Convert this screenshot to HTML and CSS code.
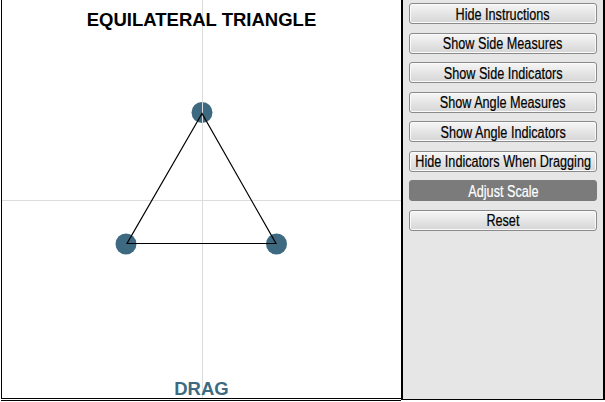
FILE: index.html
```html
<!DOCTYPE html>
<html lang="en">
  <head>
    <title>Equilateral Triangle</title>
    <link rel="stylesheet" href="styles.css">
  </head>
  <body>
    <div class="app">
      <div class="left">
        <div class="stage">
          <svg class="board" width="399" height="398" viewBox="2 0 399 398">
            <circle cx="202" cy="112.5" r="10.5" class="pt" />
            <circle cx="126" cy="244" r="10.5" class="pt" />
            <circle cx="276.5" cy="244" r="10.5" class="pt" />
            <line x1="202.5" y1="0" x2="202.5" y2="398" class="grid" />
            <line x1="2" y1="200.5" x2="401" y2="200.5" class="grid" />
            <polygon points="202,113.5 127,243.5 276,243.5" class="tri" />
          </svg>
          <h1 class="title">EQUILATERAL TRIANGLE</h1>
          <div class="drag">DRAG</div>
        </div>
      </div>
      <div class="panel">
        <button class="btn"><span>Hide Instructions</span></button>
        <button class="btn"><span>Show Side Measures</span></button>
        <button class="btn"><span>Show Side Indicators</span></button>
        <button class="btn"><span>Show Angle Measures</span></button>
        <button class="btn"><span>Show Angle Indicators</span></button>
        <button class="btn"><span>Hide Indicators When Dragging</span></button>
        <button class="btn active"><span>Adjust Scale</span></button>
        <button class="btn"><span>Reset</span></button>
      </div>
    </div>
  </body>
</html>
```

FILE: styles.css
```css
body {
  margin: 0;
  background: #fff;
  font-family: "Liberation Sans", Arial, sans-serif;
}
.app {
  display: flex;
  width: 605px;
  height: 402px;
}
.left {
  margin-left: 1px;
  padding-bottom: 1px;
  border-bottom: 1px solid #000;
  height: 399px;
}
.stage {
  position: relative;
  width: 399px;
  height: 398px;
  border-left: 1px solid #000;
  border-bottom: 1px solid #000;
  background: #fff;
}
.board {
  display: block;
}
.pt {
  fill: #3d6a80;
}
.grid {
  stroke: #dcdcdc;
  stroke-width: 1;
}
.tri {
  fill: none;
  stroke: #000;
  stroke-width: 1.2;
}
.title {
  position: absolute;
  top: 9px;
  left: 0;
  right: 0;
  margin: 0;
  text-align: center;
  font-size: 18.5px;
  line-height: 22px;
  font-weight: bold;
  color: #000;
}
.drag {
  position: absolute;
  bottom: -2px;
  left: 0;
  right: 0;
  text-align: center;
  font-size: 18.5px;
  line-height: 22px;
  font-weight: bold;
  color: #3d6a80;
}
.panel {
  display: flex;
  flex-direction: column;
  gap: 8.5px;
  box-sizing: border-box;
  width: 204px;
  height: 400px;
  padding: 3px 6px 0;
  border-left: 2px solid #000;
  border-right: 2px solid #000;
  border-bottom: 1px solid #000;
  background: #e6e6e6;
}
.btn {
  flex: none;
  display: flex;
  justify-content: center;
  align-items: center;
  height: 21px;
  padding: 2px 0 0;
  border: 1px solid #8a8a8a;
  border-radius: 3px;
  background: linear-gradient(#f6f6f6, #e2e2e2 60%, #d6d6d6);
  box-shadow: inset 0 0 0 1px #fafafa;
  font-family: "Liberation Sans", Arial, sans-serif;
  font-size: 16px;
  color: #000;
  white-space: nowrap;
  overflow: visible;
}
.btn span {
  flex: none;
  display: inline-block;
  transform: scaleX(0.79);
  -webkit-text-stroke: 0.2px currentColor;
}
.btn.active {
  background: #7b7b7b;
  border-color: #7b7b7b;
  box-shadow: none;
  color: #fff;
}
```
